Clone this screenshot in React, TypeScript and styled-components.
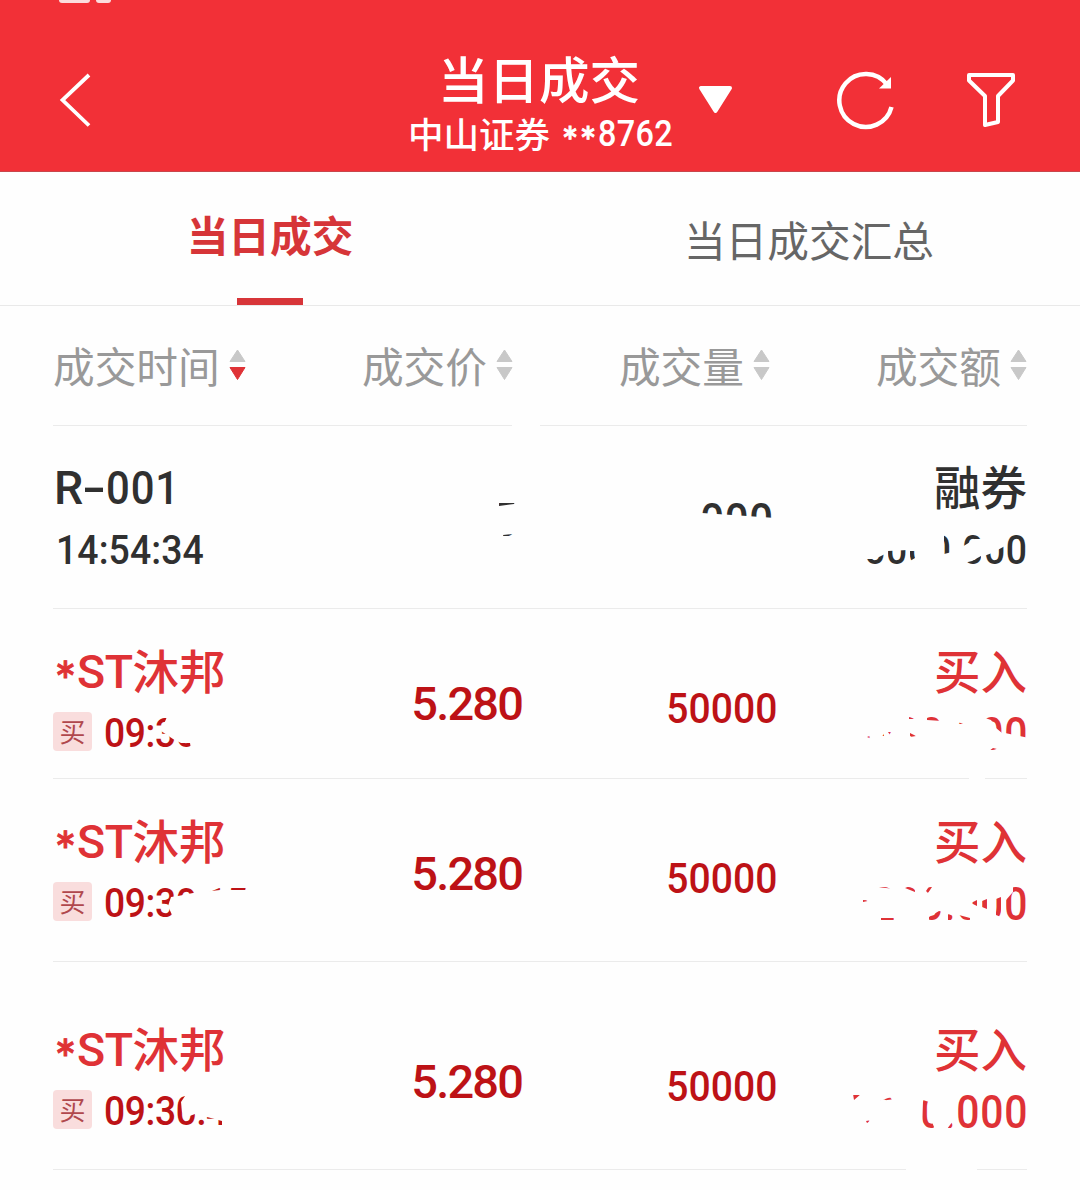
import React from "react";
import styled, { createGlobalStyle } from "styled-components";

const RED = "#df3236";
const DEEP_RED = "#bd1216";
const INK = "#303030";

const GlobalStyle = createGlobalStyle`
  * { box-sizing: border-box; }
  body {
    margin: 0;
    background: #fefefe;
    font-family: Roboto, "Noto Sans CJK SC", sans-serif;
  }
`;

const Page = styled.div`
  width: 1080px;
  height: 1190px;
  overflow: hidden;
  background: #fefefe;
`;

/* ---------- header ---------- */

const Header = styled.header`
  display: grid;
  grid-template-columns: 409px 264px 1fr;
  height: 172px;
  background: #f23037;
  border-bottom: 1px solid #c9464b;
  color: #fff;
`;

const HeaderLeft = styled.div`
  display: flex;
  flex-direction: column;
  padding-left: 59px;
`;

const StatusRemnants = styled.div`
  display: flex;
  gap: 6px;
  height: 72px;
`;

const Remnant = styled.span<{ $w: number }>`
  width: ${(p) => p.$w}px;
  height: 3px;
  border-radius: 0 0 4px 4px;
  background: #fbdcdd;
`;

const Titles = styled.div`
  display: flex;
  flex-direction: column;
  align-items: center;
  padding-top: 52px;
  white-space: nowrap;
`;

const Title = styled.h1`
  margin: 0 4px 0 0;
  font: 500 50.5px/50px "Noto Sans CJK SC", sans-serif;
`;

const Subtitle = styled.div`
  display: flex;
  align-items: center;
  align-self: flex-start;
  width: 264px;
  margin-top: 11px;
  height: 42px;
  font-size: 35.5px;
  line-height: 42px;
  font-weight: 500;
`;

const Broker = styled.span`
  font-family: "Noto Sans CJK SC", sans-serif;
  margin: -3px 11px 0 -1px;
`;

const AccountNo = styled.span`
  font-size: 36px;
  letter-spacing: 0.4px;
  margin-left: 1px;
  transform: scaleX(0.9);
  transform-origin: left center;
`;

const Star = styled.span<{ $size: number; $drop: number; $w: number }>`
  display: inline-block;
  flex: none;
  width: ${(p) => p.$w}px;
  text-align: center;
  font-family: "DejaVu Sans", sans-serif;
  font-weight: 700;
  font-size: ${(p) => p.$size}px;
  line-height: 1;
  -webkit-text-stroke: 0.9px currentColor;
  transform: translateY(${(p) => p.$drop}px) scaleX(0.9);
`;

const HeaderActions = styled.div`
  display: flex;
  align-items: flex-start;
  padding: 70px 0 0 25px;
`;

const CaretIcon = styled.svg`
  margin: 15px 103px 0 0;
`;
const RefreshIcon = styled.svg`
  margin-right: 70px;
`;

/* ---------- tabs ---------- */

const Tabs = styled.nav`
  display: grid;
  grid-template-columns: 1fr 1fr;
  height: 134px;
  border-bottom: 1px solid #e9e9e9;
`;

const Tab = styled.div<{ $active?: boolean }>`
  display: flex;
  flex-direction: column;
  align-items: center;
  justify-content: space-between;
  padding-top: ${(p) => (p.$active ? 32 : 37)}px;
  padding-right: ${(p) => (p.$active ? 0 : 2)}px;
  font: ${(p) => (p.$active ? 700 : 400)} 41.7px/60px "Noto Sans CJK SC", sans-serif;
  color: ${(p) => (p.$active ? "#d63538" : "#666")};
`;

const TabBar = styled.span`
  width: 66px;
  height: 7px;
  background: #d73539;
`;

/* ---------- table ---------- */

const HeadRow = styled.div`
  display: grid;
  grid-template-columns: 1fr 257px 257px 257px;
  margin: 0 53px;
  height: 120px;
  border-bottom: 1px solid #ebebeb;
`;

const HeadCell = styled.div<{ $first?: boolean }>`
  display: flex;
  justify-content: ${(p) => (p.$first ? "flex-start" : "flex-end")};
  align-items: flex-start;
  padding-top: 29px;
  gap: 9px;
  font: 400 41.7px/60px "Noto Sans CJK SC", sans-serif;
  color: #999;
  white-space: nowrap;
`;

const SortIcon = styled.svg`
  flex: none;
  margin-top: 14px;
`;

const Row = styled.div<{ $h: number; $top: number }>`
  position: relative;
  display: grid;
  grid-template-columns: 247px 224px 254px 1fr;
  margin: 0 53px;
  height: ${(p) => p.$h}px;
  padding-top: ${(p) => p.$top}px;
  border-bottom: 1px solid #ebebeb;
`;

const Stack = styled.div<{ $right?: boolean }>`
  display: flex;
  flex-direction: column;
  align-items: ${(p) => (p.$right ? "flex-end" : "flex-start")};
  gap: 6px;
  white-space: nowrap;
`;

const Name = styled.div<{ $color: string }>`
  display: flex;
  align-items: center;
  height: 56px;
  padding-left: 1px;
  font-size: 46.5px;
  line-height: 56px;
  font-weight: 500;
  color: ${(p) => p.$color};
`;

const Latin = styled.span<{ $ls: number }>`
  letter-spacing: ${(p) => p.$ls}px;
`;

const Hyphen = styled.span`
  display: inline-block;
  width: 24px;
  text-align: center;
  letter-spacing: 0;
  transform: scaleX(1.5);
`;

const Hanzi = styled.span`
  height: 56px;
  margin-top: -6px;
  font-family: "Noto Sans CJK SC", sans-serif;
`;

const Line = styled.div`
  display: flex;
  align-items: center;
  height: 56px;
`;

const Badge = styled.span`
  width: 39px;
  height: 39px;
  margin: 0 12px 5px 0;
  border-radius: 4px;
  background: #f9dddd;
  color: #b0484d;
  font: 400 26px/38px "Noto Sans CJK SC", sans-serif;
  text-align: center;
`;

const Num = styled.span<{
  $size: number;
  $ls: number;
  $color: string;
  $sx?: number;
  $from?: "left" | "right";
  $indent?: number;
}>`
  display: inline-block;
  margin-left: ${(p) => p.$indent ?? 0}px;
  margin-right: ${(p) => -p.$ls}px;
  font-size: ${(p) => p.$size}px;
  line-height: 56px;
  letter-spacing: ${(p) => p.$ls}px;
  font-weight: 500;
  color: ${(p) => p.$color};
  white-space: nowrap;
  transform: scaleX(${(p) => p.$sx ?? 1});
  transform-origin: ${(p) => p.$from ?? "right"} center;
`;

const ValueCell = styled.div<{ $top: number; $right?: number }>`
  display: flex;
  justify-content: flex-end;
  align-items: flex-start;
  padding-top: ${(p) => p.$top}px;
  padding-right: ${(p) => p.$right ?? 0}px;
`;

const EraserLayer = styled.svg`
  position: absolute;
  left: -53px;
  top: 0;
  overflow: visible;
  pointer-events: none;
`;

const Sort = ({ down }: { down?: boolean }) => (
  <SortIcon width="17" height="32" viewBox="0 0 17 32">
    <path d="M8.500 1 L16 12.500 H1 Z" fill="#c8c8c8" stroke="#c8c8c8" strokeLinejoin="round" />
    <path
      d="M1 18.500 H16 L8.500 30.500 Z"
      fill={down ? RED : "#c8c8c8"}
      stroke={down ? RED : "#c8c8c8"}
      strokeLinejoin="round"
    />
  </SortIcon>
);

/* White brush marks, in page coordinates; inner sub-paths are left uncovered. */
const Eraser = ({ y, h, d }: { y: number; h: number; d: string }) => (
  <EraserLayer width="1080" height={h} viewBox={`0 ${y} 1080 ${h}`}>
    <path d={d} fill="#fefefe" fillRule="evenodd" />
  </EraserLayer>
);

type Trade = { y: number; h: number; top: number; time: string; marks: string };

const trades: Trade[] = [
  {
    y: 609,
    h: 170,
    top: 35,
    time: "09:30",
    marks: `M169 712 L161 731 L173 739 L181 743 L190 743 L192 755 H250 V712 Z
      M840 710 H1030 V755 H840 Z
      M867 737 L872 735 V739 Z M877 735 L884 732 V736 L877 736 Z
      M888 732 H897 V739 L892 738 Z M909 714 H915 V719 L909 719 Z
      M910 733 L916 736 L910 737 Z M927 714 H942 V721 L927 720 Z
      M958 722 L963 724 L958 724 Z
      M985 714 H1002 V733 L996 728 L991 720 L985 718 Z
      M1005 712 H1029 V738 L1005 733 Z M989 751 L993 748 L997 749 V752 Z
      M969 776 H985 V781 H969 Z`,
  },
  {
    y: 779,
    h: 183,
    top: 35,
    time: "09:30:15",
    marks: `M171 897 L178 896 L193 893 L220 890 L245 890 L257 880 V925 H178 L172 915 L168 906 Z
      M840 880 H1030 V925 H840 Z
      M877 885 H895 V889 L877 887 Z M905 888 L915 884 V892 Z
      M926 891 L930 885 L932 887 L928 893 Z M863 900 L870 900.500 L863 902 Z
      M881 918 H894 V922 H881 Z M929 917 L939 911 L944 912 V922 H929 Z
      M948 914 L954 916 V922 H948 Z M959 915 L970 918 V922 H959 Z
      M971 903 L977 900 V906 Z M982 901 L987 899 V909 L982 907 Z
      M996 899 L1001 897 V917 L996 915 Z
      M1006 914 L1006 900 L1013 892 L1013 884 H1029 V923 H1006 Z`,
  },
  {
    y: 962,
    h: 208,
    top: 60,
    time: "09:30:4",
    marks: `M189 1090 L181 1102 L182 1112 L187 1117 L195 1114 L198 1119 L207 1117 L222 1121 V1130 H260 V1090 Z
      M840 1090 H956 V1133 H840 Z
      M853 1094 H861 L854 1100 Z M880 1101 L888 1098 L895 1097 V1099 Z
      M866 1121 L872 1120 L867 1123 Z
      M923 1100 L929 1102 L930 1117 L934 1127 L932 1131 H922 Z
      M947 1129 L953 1121 V1131 H947 Z
      M906 1167 H977 V1172 H906 Z`,
  },
];

const repoMarks = `M470 493 H530 V545 H470 Z
  M499 500 H516 L514 504 L499 506 Z M503 535 L513 534 V539 H503 Z
  M680 493 H776 V545 H680 Z
  M702 495 H775 V518 L747 516 L702 513 Z M695 511 L697 507 L698 511 Z
  M815 528 H1006 V570 H815 Z
  M857 565 L862 562 V568 H857 Z M865 559 L875 559 L885 554 V568 H865 Z
  M888 551 L908 550 V568 H888 Z M910 551 H916 L915 558 L910 561 Z
  M944 533 L952 536 V552 L944 554 Z
  M962 547 L975 539 H982 V532 H962 Z M964 563 L972 561 L981 556 V568 H964 Z
  M984 556 L992 553 L1005 546 V568 H984 Z
  M512 423 H540 V427 H512 Z`;

export default function App() {
  return (
    <Page>
      <GlobalStyle />
      <Header>
        <HeaderLeft>
          <StatusRemnants>
            <Remnant $w={31} />
            <Remnant $w={15} />
          </StatusRemnants>
          <svg width="34" height="56" viewBox="59 72 34 56" fill="none" stroke="#fff" strokeWidth="3.8">
            <path d="M89 75 L62.500 100 L89 125.500" />
          </svg>
        </HeaderLeft>
        <Titles>
          <Title>当日成交</Title>
          <Subtitle>
            <Broker>中山证券</Broker>
            <Star $size={28} $drop={4} $w={18}>*</Star>
            <Star $size={28} $drop={4} $w={18}>*</Star>
            <AccountNo>8762</AccountNo>
          </Subtitle>
        </Titles>
        <HeaderActions>
          <CaretIcon width="35" height="29" viewBox="698 85 35 29">
            <path d="M701 88 H730 L715.500 111 Z" fill="#fff" stroke="#fff" strokeWidth="4" strokeLinejoin="round" />
          </CaretIcon>
          <RefreshIcon width="60" height="60" viewBox="836 70 60 60">
            <path d="M887 84.500 A26.500 26.500 0 1 0 891.500 107" fill="none" stroke="#fff" strokeWidth="4.500" />
            <path d="M891 77 V88.500 H879 Z" fill="#fff" />
          </RefreshIcon>
          <svg width="50" height="60" viewBox="966 70 50 60" fill="none" stroke="#fff" strokeWidth="4" strokeLinejoin="round">
            <path d="M969 75 H1013 V80.500 L998 96 V122 L985 125 V96 L969 80.500 Z" />
          </svg>
        </HeaderActions>
      </Header>

      <Tabs>
        <Tab $active>
          当日成交
          <TabBar />
        </Tab>
        <Tab>当日成交汇总</Tab>
      </Tabs>

      <HeadRow>
        <HeadCell $first>成交时间<Sort down /></HeadCell>
        <HeadCell>成交价<Sort /></HeadCell>
        <HeadCell>成交量<Sort /></HeadCell>
        <HeadCell>成交额<Sort /></HeadCell>
      </HeadRow>

      <Row $h={183} $top={34}>
        <Stack>
          <Name $color={INK}>
            <Latin $ls={-1}>R</Latin>
            <Hyphen>-</Hyphen>
            <Num $size={46.5} $ls={1} $sx={0.9} $from="left" $color={INK}>001</Num>
          </Name>
          <Line>
            <Num $size={41.5} $ls={0.1} $sx={0.9} $from="left" $indent={3} $color={INK}>14:54:34</Num>
          </Line>
        </Stack>
        <ValueCell $top={32} $right={7}>
          <Num $size={46.5} $ls={0.8} $sx={0.9} $color={INK}>5</Num>
        </ValueCell>
        <ValueCell $top={32} $right={5}>
          <Num $size={46.5} $ls={0.8} $sx={0.9} $color={INK}>000</Num>
        </ValueCell>
        <Stack $right>
          <Name $color={INK}><Hanzi>融券</Hanzi></Name>
          <Line>
            <Num $size={41.5} $ls={0.6} $sx={0.9} $color={INK}>10000.000</Num>
          </Line>
        </Stack>
        <Eraser y={426} h={183} d={repoMarks} />
      </Row>

      {trades.map((t) => (
        <Row key={t.y} $h={t.h} $top={t.top}>
          <Stack>
            <Name $color={RED}>
              <Star $size={37} $drop={3} $w={23}>*</Star>
              <Latin $ls={-0.5}>ST</Latin>
              <Hanzi>沐邦</Hanzi>
            </Name>
            <Line>
              <Badge>买</Badge>
              <Num $size={40} $ls={-0.4} $sx={0.93} $from="left" $color={DEEP_RED}>{t.time}</Num>
            </Line>
          </Stack>
          <ValueCell $top={32}>
            <Num $size={47} $ls={-1.8} $indent={0} $color={DEEP_RED}>5.280</Num>
          </ValueCell>
          <ValueCell $top={37} $right={1}>
            <Num $size={42} $ls={0} $sx={0.93} $color={DEEP_RED}>50000</Num>
          </ValueCell>
          <Stack $right>
            <Name $color={RED}><Hanzi>买入</Hanzi></Name>
            <Line>
              <Num $size={47} $ls={0.9} $sx={0.87} $color={RED}>5280.000</Num>
            </Line>
          </Stack>
          <Eraser y={t.y} h={t.h} d={t.marks} />
        </Row>
      ))}
    </Page>
  );
}
